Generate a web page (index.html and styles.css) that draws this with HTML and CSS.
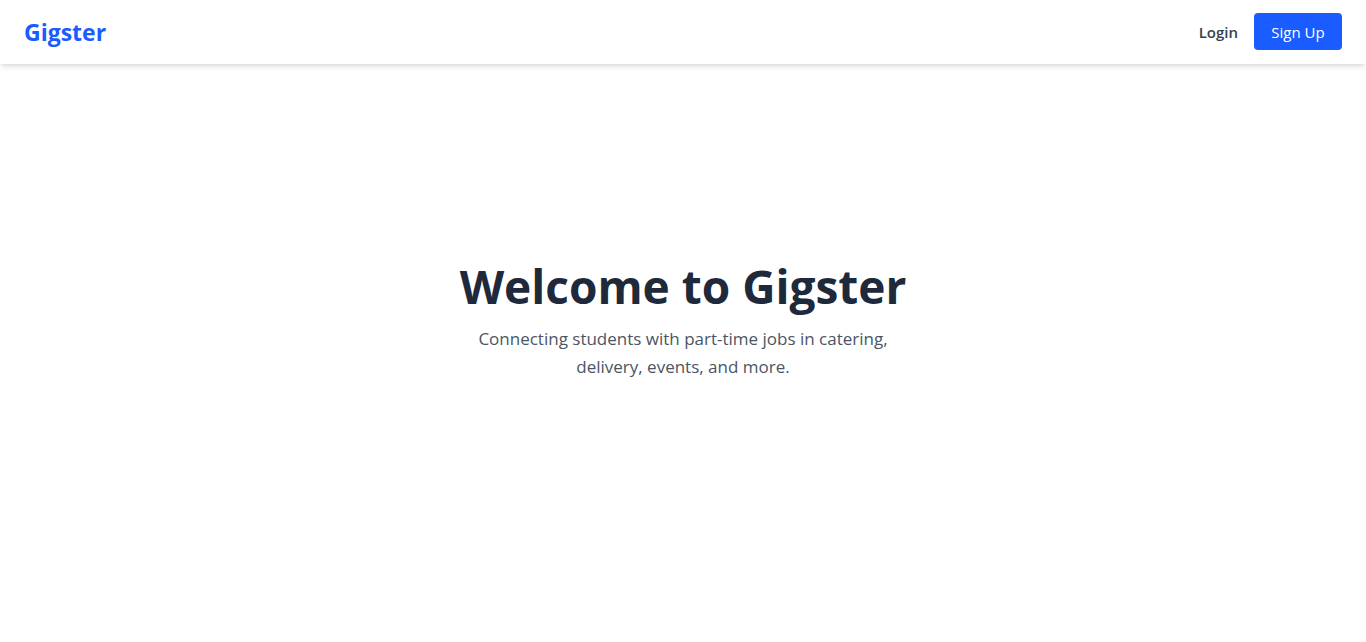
FILE: index.html
```html
<!DOCTYPE html>
<html lang="en">
<head>
<meta charset="utf-8">
<title>Gigster</title>
<link rel="stylesheet" href="styles.css">
</head>
<body>
<header class="nav">
  <a class="logo" href="#">Gigster</a>
  <nav class="nav-actions">
    <a class="login" href="#">Login</a>
    <a class="signup" href="#">Sign Up</a>
  </nav>
</header>
<main class="hero">
  <h1 class="hero-title">Welcome to Gigster</h1>
  <p class="hero-sub">Connecting students with part-time jobs in catering, delivery, events, and more.</p>
</main>
</body>
</html>
```
FILE: styles.css
```css
* { box-sizing: border-box; }
html, body { margin: 0; padding: 0; }
body {
  font-family: "Open Sans", "Noto Sans", "Liberation Sans", sans-serif;
  background: #ffffff;
  color: #1f2937;
  height: 642px;
  overflow: hidden;
}
a { text-decoration: none; }
.nav {
  height: 64px;
  display: flex;
  align-items: center;
  justify-content: space-between;
  padding: 0 24px 0 24px;
  background: #fff;
  box-shadow: 0 4px 6px -1px rgba(0,0,0,0.1), 0 2px 4px -2px rgba(0,0,0,0.1);
  position: relative;
  z-index: 1;
}
.logo {
  font-size: 23px;
  font-weight: 700;
  color: #1a5cff;
}
.nav-actions {
  display: flex;
  align-items: center;
  gap: 16px;
}
.login {
  font-size: 15px;
  font-weight: 600;
  color: #374151;
}
.signup {
  display: flex;
  align-items: center;
  justify-content: center;
  width: 88px;
  height: 37px;
  margin-top: -1px;
  border-radius: 4px;
  background: #1a5cff;
  color: #fff;
  font-size: 15px;
}
.hero {
  height: 578px;
  padding-bottom: 67px;
  display: flex;
  flex-direction: column;
  align-items: center;
  justify-content: center;
  text-align: center;
}
.hero-title {
  margin: 0;
  font-size: 46px;
  font-weight: 700;
  line-height: 56px;
  color: #1e293b;
}
.hero-sub {
  margin: 11px 0 0;
  max-width: 440px;
  font-size: 17px;
  line-height: 28px;
  color: #4b5563;
}
```
